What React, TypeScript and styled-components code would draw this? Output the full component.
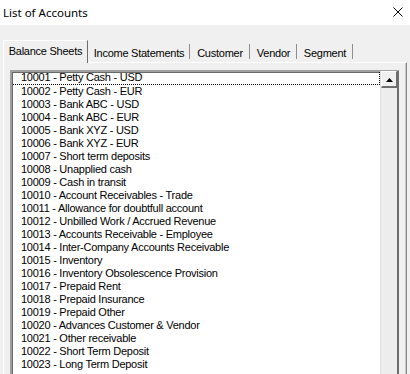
import React from "react";
import styled, { createGlobalStyle } from "styled-components";

const accounts = [
  "10001 - Petty Cash - USD",
  "10002 - Petty Cash - EUR",
  "10003 - Bank ABC - USD",
  "10004 - Bank ABC - EUR",
  "10005 - Bank XYZ - USD",
  "10006 - Bank XYZ - EUR",
  "10007 - Short term deposits",
  "10008 - Unapplied cash",
  "10009 - Cash in transit",
  "10010 - Account Receivables - Trade",
  "10011 - Allowance for doubtfull account",
  "10012 - Unbilled Work / Accrued Revenue",
  "10013 - Accounts Receivable - Employee",
  "10014 - Inter-Company Accounts Receivable",
  "10015 - Inventory",
  "10016 - Inventory Obsolescence Provision",
  "10017 - Prepaid Rent",
  "10018 - Prepaid Insurance",
  "10019 - Prepaid Other",
  "10020 - Advances Customer & Vendor",
  "10021 - Other receivable",
  "10022 - Short Term Deposit",
  "10023 - Long Term Deposit",
];

const tabs = [
  { label: "Balance Sheets", width: 85 },
  { label: "Income Statements", width: 102 },
  { label: "Customer", width: 60 },
  { label: "Vendor", width: 47 },
  { label: "Segment", width: 56 },
];

const GlobalStyle = createGlobalStyle`
  html, body {
    margin: 0;
    padding: 0;
    background: #f0f0f0;
  }
  body {
    width: 410px;
    height: 374px;
    overflow: hidden;
  }
`;

const Window = styled.div`
  width: 410px;
  height: 374px;
  background: #f0f0f0;
  display: flex;
  flex-direction: column;
  overflow: hidden;
`;

const TitleBar = styled.div`
  height: 25px;
  background: #ffffff;
  display: flex;
  align-items: center;
  justify-content: space-between;
  padding: 0 7px 0 3px;
  flex-shrink: 0;
`;

const Title = styled.span`
  font-family: "Noto Sans", "Open Sans", sans-serif;
  font-size: 11.5px;
  color: #000;
  margin-top: -1px;
`;

const CloseButton = styled.svg`
  width: 10px;
  height: 10px;
  margin-top: -1px;
`;

const TabStrip = styled.div`
  display: flex;
  align-items: flex-end;
  margin-top: 15px;
  padding-left: 3px;
  height: 22px;
  flex-shrink: 0;
`;

const Tab = styled.div<{ $active?: boolean; $width: number }>`
  box-sizing: border-box;
  width: ${({ $width }) => $width}px;
  height: ${({ $active }) => ($active ? "23px" : "20px")};
  display: flex;
  align-items: ${({ $active }) => ($active ? "flex-start" : "center")};
  justify-content: center;
  padding-top: ${({ $active }) => ($active ? "4px" : "0")};
  font-family: "Liberation Sans", Arial, sans-serif;
  font-size: 11px;
  letter-spacing: -0.25px;
  color: #000;
  background: #f0f0f0;
  border-top: 1px solid ${({ $active }) => ($active ? "#ffffff" : "transparent")};
  border-left: 1px solid ${({ $active }) => ($active ? "#ffffff" : "transparent")};
  border-right: 1px solid ${({ $active }) => ($active ? "#6d6d6d" : "transparent")};
  margin-bottom: ${({ $active }) => ($active ? "-1px" : "0")};
  position: relative;
  z-index: ${({ $active }) => ($active ? 1 : 0)};
  white-space: nowrap;

  ${({ $active }) =>
    !$active &&
    `
    &::after {
      content: "";
      position: absolute;
      right: -1px;
      top: 1px;
      height: 15px;
      width: 1px;
      background: #8e8e8e;
    }
  `}
`;

const Panel = styled.div`
  flex: 1;
  margin-left: 3px;
  margin-right: 3px;
  border-top: 1px solid #ffffff;
  border-left: 1px solid #ffffff;
  border-right: 1px solid #8a8a8a;
  box-shadow: inset -1px 0 0 #c8c8c8;
  padding: 7px 7px 0 6px;
  display: flex;
  min-height: 0;
`;

const ListBox = styled.div`
  flex: 1;
  display: flex;
  border-top: 2px solid #a0a0a0;
  border-left: 2px solid #a0a0a0;
  box-shadow: inset 1px 1px 0 #696969;
  background: #ffffff;
  min-height: 0;
`;

const Items = styled.ul`
  flex: 1;
  list-style: none;
  margin: 0;
  padding: 0;
  overflow: hidden;
`;

const Item = styled.li<{ $focused?: boolean }>`
  box-sizing: border-box;
  font-family: "Liberation Sans", Arial, sans-serif;
  font-size: 11px;
  letter-spacing: -0.25px;
  color: #000;
  white-space: nowrap;
  outline: ${({ $focused }) => ($focused ? "1px dotted #000" : "none")};
  outline-offset: -1px;
  margin-left: ${({ $focused }) => ($focused ? "-1px" : "0")};
  padding-left: ${({ $focused }) => ($focused ? "10px" : "9px")};
  margin-top: ${({ $focused }) => ($focused ? "-1px" : "0")};
  height: ${({ $focused }) => ($focused ? "14px" : "13px")};
  line-height: ${({ $focused }) => ($focused ? "13px" : "12px")};
`;

const ScrollBar = styled.div`
  width: 16px;
  background: #ededed;
  border-left: 1px solid #e0e0e0;
  border-right: 2px solid #6d6d6d;
  display: flex;
  flex-direction: column;
  margin-top: -1px;
`;

const ScrollButton = styled.div`
  box-sizing: border-box;
  height: 17px;
  background: #f0f0f0;
  border-top: 1px solid #ffffff;
  border-left: 1px solid #ffffff;
  border-right: 1px solid #6d6d6d;
  border-bottom: 2px solid #6d6d6d;
  display: flex;
  align-items: center;
  justify-content: center;
`;

const Arrow = styled.svg`
  width: 7px;
  height: 4px;
  margin-top: 1px;
`;

export default function App() {
  return (
    <Window>
      <GlobalStyle />
      <TitleBar>
        <Title>List of Accounts</Title>
        <CloseButton viewBox="0 0 10 10">
          <path d="M0.5 0.5 L9.5 9.5 M9.5 0.5 L0.5 9.5" stroke="#000" strokeWidth="1" />
        </CloseButton>
      </TitleBar>
      <TabStrip>
        {tabs.map((t, i) => (
          <Tab key={t.label} $active={i === 0} $width={t.width}>
            {t.label}
          </Tab>
        ))}
      </TabStrip>
      <Panel>
        <ListBox>
          <Items>
            {accounts.map((a, i) => (
              <Item key={a} $focused={i === 0}>
                {a}
              </Item>
            ))}
          </Items>
          <ScrollBar>
            <ScrollButton>
              <Arrow viewBox="0 0 7 4">
                <path d="M3.5 0 L7 4 L0 4 Z" fill="#000" />
              </Arrow>
            </ScrollButton>
          </ScrollBar>
        </ListBox>
      </Panel>
    </Window>
  );
}
